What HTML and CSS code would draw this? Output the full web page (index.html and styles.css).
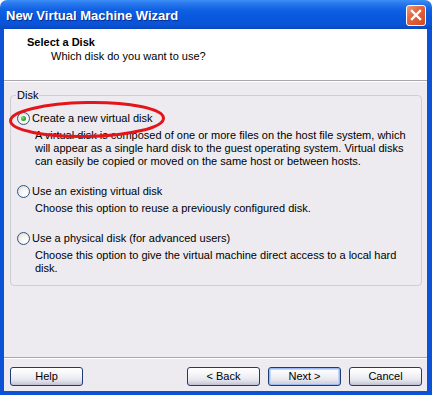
FILE: index.html
```html
<!DOCTYPE html>
<html lang="en">
<head>
<meta charset="utf-8">
<title>New Virtual Machine Wizard</title>
<link rel="stylesheet" href="styles.css">
</head>
<body>
<div class="window">
  <div class="titlebar">
    <span class="title">New Virtual Machine Wizard</span>
    <button class="close" aria-label="Close">
      <svg width="12" height="12" viewBox="0 0 12 12"><path d="M2 2 L10 10 M10 2 L2 10" stroke="#fff" stroke-width="2.4" stroke-linecap="square"/></svg>
    </button>
  </div>
  <div class="client">
    <div class="header">
      <div class="h-title">Select a Disk</div>
      <div class="h-sub">Which disk do you want to use?</div>
    </div>
    <div class="body">
      <fieldset class="group">
        <legend class="group-label">Disk</legend>
        <div class="option">
          <div class="opt-row"><span class="radio checked"></span><span class="opt-label">Create a new virtual disk</span></div>
          <div class="desc">A virtual disk is composed of one or more files on the host file system, which<br>will appear as a single hard disk to the guest operating system. Virtual disks<br>can easily be copied or moved on the same host or between hosts.</div>
        </div>
        <div class="option">
          <div class="opt-row"><span class="radio"></span><span class="opt-label">Use an existing virtual disk</span></div>
          <div class="desc">Choose this option to reuse a previously configured disk.</div>
        </div>
        <div class="option">
          <div class="opt-row"><span class="radio"></span><span class="opt-label">Use a physical disk (for advanced users)</span></div>
          <div class="desc">Choose this option to give the virtual machine direct access to a local hard<br>disk.</div>
        </div>
      </fieldset>
    </div>
    <div class="footer">
      <button class="btn">Help</button>
      <div class="nav">
        <button class="btn">&lt; Back</button>
        <button class="btn default">Next &gt;</button>
        <button class="btn">Cancel</button>
      </div>
    </div>
  </div>
  <svg class="annotation" width="432" height="395" viewBox="0 0 432 395">
    <ellipse cx="87" cy="119.5" rx="76.5" ry="17" fill="none" stroke="#e3151b" stroke-width="3" transform="rotate(-1 87 119.5)"/>
  </svg>
</div>
</body>
</html>
```
FILE: styles.css
```css
* { box-sizing: border-box; }
html, body { margin: 0; padding: 0; background: #fff; }
body {
  font-family: "Liberation Sans", Arial, sans-serif;
  font-size: 11px;
  line-height: 13px;
  color: #000;
}
.window {
  position: relative;
  width: 432px;
  height: 395px;
  display: flex;
  flex-direction: column;
}
.titlebar {
  height: 29px;
  flex: none;
  display: flex;
  align-items: center;
  justify-content: space-between;
  padding: 0 6px 0 6px;
  border-radius: 7px 7px 0 0;
  background: linear-gradient(#3d8ff7 0%, #2a79ee 12%, #0f60e2 35%, #0858dd 60%, #0a53d6 85%, #0a47c0 100%);
}
.title {
  color: #fff;
  font-weight: bold;
  font-size: 13px;
  line-height: 15px;
  padding-top: 2px;
  text-shadow: 1px 1px 0 #0b2c8c;
}
.close {
  width: 20px;
  height: 21px;
  margin-top: 1px;
  padding: 0;
  border: 1px solid #fff;
  border-radius: 3px;
  background: linear-gradient(135deg, #eb9a7e 0%, #e2673f 40%, #d4471f 100%);
  display: flex;
  align-items: center;
  justify-content: center;
}
.client {
  flex: 1;
  display: flex;
  flex-direction: column;
  border-style: solid;
  border-color: #0b52d6;
  border-width: 0 5px 4px 4px;
  background: #edebef;
}
.header {
  height: 52px;
  flex: none;
  background: #fff;
  padding: 7px 0 0 23px;
  border-bottom: 1px solid #a9a7ad;
}
.h-title { font-weight: bold; }
.h-sub { padding-left: 24px; margin-top: 1px; }
.body {
  flex: 1;
  border-top: 1px solid #fff;
  padding: 7px 5px 0 6px;
}
.group {
  margin: 0;
  padding: 10px 6px 10px 6px;
  border: 1px solid #d0ced5;
  border-radius: 4px;
  min-width: 0;
}
.group-label {
  padding: 0 1px;
  margin-left: -1px;
  line-height: 13px;
}
.option + .option { margin-top: 17px; }
.opt-row {
  display: flex;
  align-items: center;
  height: 13px;
}
.radio {
  width: 13px;
  height: 13px;
  flex: none;
  border-radius: 50%;
  border: 1px solid #2a5584;
  background: radial-gradient(circle at 65% 70%, #ffffff 0%, #f4f3f0 45%, #d8d6cf 100%);
  margin-right: 2px;
  display: flex;
  align-items: center;
  justify-content: center;
}
.radio.checked::after {
  content: "";
  width: 5px;
  height: 5px;
  border-radius: 50%;
  background: radial-gradient(circle at 35% 35%, #7be07b 0%, #2aa12a 60%, #1a7d1a 100%);
}
.desc {
  padding-left: 18px;
  margin-top: 4px;
  white-space: nowrap;
}
.footer {
  flex: none;
  height: 34px;
  border-top: 1px solid #a9a7ad;
  box-shadow: inset 0 1px 0 #fff;
  padding: 9px 5px 0 6px;
  display: flex;
  justify-content: space-between;
  align-items: flex-start;
}
.nav { display: flex; gap: 8px; }
.btn {
  width: 73px;
  height: 19px;
  padding: 0;
  font-family: "Liberation Sans", Arial, sans-serif;
  font-size: 11px;
  line-height: 13px;
  color: #000;
  border: 1px solid #1f3b73;
  border-radius: 3px;
  background: linear-gradient(#ffffff 0%, #f6f6f9 35%, #e6e6ee 70%, #cfd0dd 90%, #bdbfd2 100%);
}
.btn.default {
  box-shadow: inset 0 0 0 1px #9cbaf0, inset 0 0 0 2px #c4d6f8;
}
.annotation {
  position: absolute;
  left: 0;
  top: 0;
  pointer-events: none;
}
```
